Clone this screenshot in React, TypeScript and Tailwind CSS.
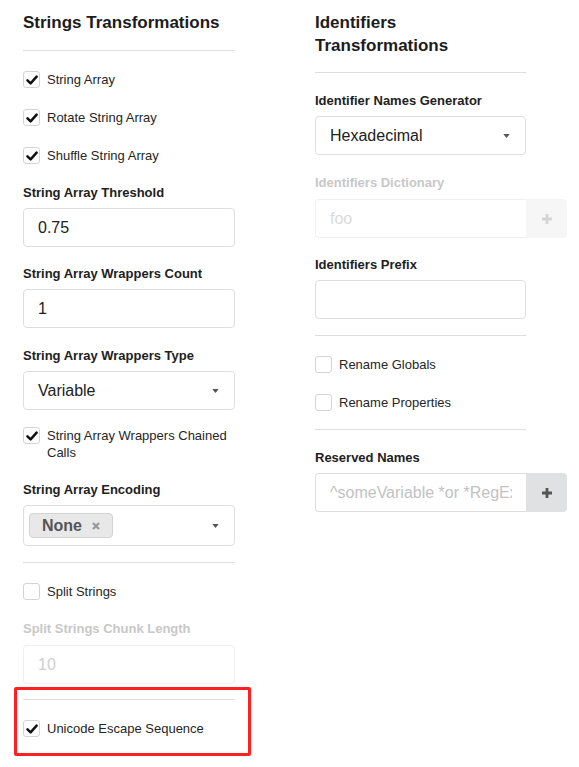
import React from "react";

const font = { fontFamily: '"Liberation Sans", Arial, sans-serif' };

function CheckBox({ label, checked, className = "" }: { label: string; checked?: boolean; className?: string }) {
  return (
    <label className={`flex items-start gap-[7px] text-[13px] leading-[17px] text-[#262626] ${className}`}>
      <span className="flex h-[17px] w-[17px] shrink-0 items-center justify-center rounded-[3px] border border-[#d4d4d5] bg-white">
        {checked && (
          <svg viewBox="0 0 12 12" className="h-[12px] w-[12px]">
            <path d="M1.5 6.3 L4.6 9.3 L10.6 2.7" fill="none" stroke="#111" strokeWidth="2.5" strokeLinecap="round" strokeLinejoin="round" />
          </svg>
        )}
      </span>
      <span>{label}</span>
    </label>
  );
}

function Label({ children, disabled, className = "" }: { children: React.ReactNode; disabled?: boolean; className?: string }) {
  return (
    <div className={`text-[13px] font-bold leading-[18px] ${disabled ? "text-[#c8c8c8]" : "text-[#212121]"} ${className}`}>
      {children}
    </div>
  );
}

function Input({ value, disabled, className = "" }: { value?: string; disabled?: boolean; className?: string }) {
  return (
    <div
      className={`flex h-[39px] items-center rounded-[4px] border px-[14px] text-[16px] ${
        disabled ? "border-[#f0f0f0] text-[#cfcfcf]" : "border-[#dedede] text-[#212121]"
      } ${className}`}
    >
      {value}
    </div>
  );
}

function Caret() {
  return (
    <svg viewBox="0 0 8 5" className="h-[4px] w-[7px]">
      <path d="M0 0 H8 L4 5 Z" fill="#555" />
    </svg>
  );
}

function Select({ value, className = "" }: { value: string; className?: string }) {
  return (
    <div className={`flex h-[39px] items-center justify-between rounded-[4px] border border-[#dedede] pl-[14px] pr-[15px] text-[16px] text-[#212121] ${className}`}>
      <span>{value}</span>
      <Caret />
    </div>
  );
}

function Plus({ color }: { color: string }) {
  return (
    <svg viewBox="0 0 12 12" className="h-[12px] w-[12px]">
      <path d="M6 1 V11 M1 6 H11" stroke={color} strokeWidth="2.8" />
    </svg>
  );
}

function Divider({ className = "" }: { className?: string }) {
  return <div className={`border-t border-[#dedede] ${className}`} />;
}

export default function App() {
  return (
    <div className="flex min-h-[767px] bg-white pl-[23px]" style={font}>
      <div className="flex w-[212px] flex-col">
        <h2 className="mt-[11px] text-[17px] font-bold leading-[23px] text-[#1b1c1d]">Strings Transformations</h2>
        <Divider className="mt-[16px]" />
        <CheckBox label="String Array" checked className="mt-[20px]" />
        <CheckBox label="Rotate String Array" checked className="mt-[21px]" />
        <CheckBox label="Shuffle String Array" checked className="mt-[21px]" />
        <Label className="mt-[20px]">String Array Threshold</Label>
        <Input value="0.75" className="mt-[6px]" />
        <Label className="mt-[18px]">String Array Wrappers Count</Label>
        <Input value="1" className="mt-[6px]" />
        <Label className="mt-[19px]">String Array Wrappers Type</Label>
        <Select value="Variable" className="mt-[6px]" />
        <CheckBox label="String Array Wrappers Chained Calls" checked className="mt-[17px]" />
        <Label className="mt-[20px]">String Array Encoding</Label>
        <div className="mt-[6px] flex h-[41px] items-center justify-between rounded-[4px] border border-[#dedede] pl-[5px] pr-[15px]">
          <span className="flex h-[25px] w-[84px] items-center gap-[9px] rounded-[4px] border border-[#d4d4d5] bg-[#e8e8e8] pl-[12px] text-[16px] font-bold text-[#555]">
            None
            <svg viewBox="0 0 10 10" className="h-[10px] w-[10px]">
              <path d="M2 2 L8 8 M8 2 L2 8" stroke="#9a9a9a" strokeWidth="2.4" />
            </svg>
          </span>
          <Caret />
        </div>
        <Divider className="mt-[16px]" />
        <CheckBox label="Split Strings" className="mt-[20px]" />
        <Label disabled className="mt-[20px]">Split Strings Chunk Length</Label>
        <Input value="10" disabled className="mt-[7px]" />
        <div className="relative mt-[15px] pb-[19px]">
          <div className="pointer-events-none absolute -left-[9px] -right-[16px] -top-[12px] bottom-0 rounded-[2px] border-[3px] border-[#ff2121]" />
          <Divider />
          <CheckBox label="Unicode Escape Sequence" checked className="mt-[20px]" />
        </div>
      </div>

      <div className="ml-[80px] flex w-[252px] flex-col">
        <h2 className="mt-[11px] w-[211px] text-[17px] font-bold leading-[23px] text-[#1b1c1d]">
          Identifiers
          <br />
          Transformations
        </h2>
        <Divider className="mt-[15px] w-[211px]" />
        <Label className="mt-[19px]">Identifier Names Generator</Label>
        <Select value="Hexadecimal" className="mt-[6px] w-[211px]" />
        <Label disabled className="mt-[19px]">Identifiers Dictionary</Label>
        <div className="mt-[7px] flex h-[39px]">
          <div className="flex w-[211px] items-center rounded-l-[4px] border border-r-0 border-[#f0f0f0] px-[14px] text-[16px] text-[#dadada]">
            foo
          </div>
          <div className="flex w-[41px] items-center justify-center rounded-r-[4px] bg-[#f6f6f6]">
            <Plus color="#d5d5d5" />
          </div>
        </div>
        <Label className="mt-[18px]">Identifiers Prefix</Label>
        <Input className="mt-[6px] w-[211px]" />
        <Divider className="mt-[16px] w-[211px]" />
        <CheckBox label="Rename Globals" className="mt-[20px]" />
        <CheckBox label="Rename Properties" className="mt-[21px]" />
        <Divider className="mt-[18px] w-[211px]" />
        <Label className="mt-[19px]">Reserved Names</Label>
        <div className="mt-[6px] flex h-[39px]">
          <div className="flex w-[211px] items-center rounded-l-[4px] border border-r-0 border-[#dedede] pl-[14px] text-[16px] text-[#c2c2c2]">
            <span className="w-[182px] overflow-hidden whitespace-nowrap">^someVariable *or *RegExp</span>
          </div>
          <div className="flex w-[41px] items-center justify-center rounded-r-[4px] bg-[#e0e1e2]">
            <Plus color="#555" />
          </div>
        </div>
      </div>
    </div>
  );
}
